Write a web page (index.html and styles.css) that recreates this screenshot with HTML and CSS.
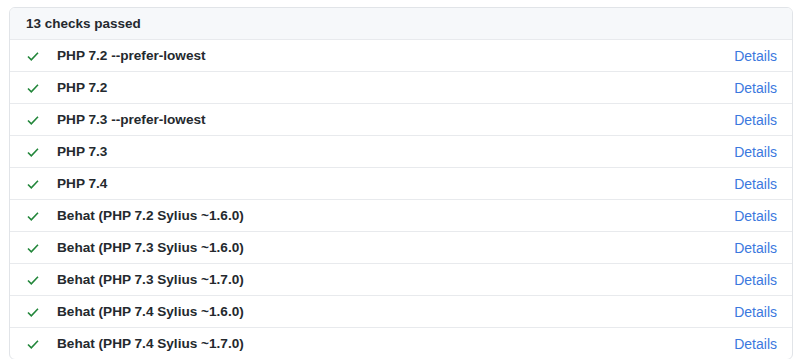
FILE: index.html
```html
<!DOCTYPE html>
<html lang="en">

<head>
    <meta charset="UTF-8">
    <meta name="viewport" content="width=device-width, initial-scale=1.0">
    <title>Checks</title>
    <link rel="stylesheet" href="styles.css">
</head>

<body>
    <div class="checkBox">
        <div class="checkHead">13 checks passed</div>
        <div class="checkRow">
            <svg class="checkIcon" viewBox="0 0 12 12" width="12" height="12"><path d="M1 6.5l3.3 3.3L11 2.8"></path></svg>
            <span class="checkName">PHP 7.2 --prefer-lowest</span>
            <a href="javascript:;">Details</a>
        </div>
        <div class="checkRow">
            <svg class="checkIcon" viewBox="0 0 12 12" width="12" height="12"><path d="M1 6.5l3.3 3.3L11 2.8"></path></svg>
            <span class="checkName">PHP 7.2</span>
            <a href="javascript:;">Details</a>
        </div>
        <div class="checkRow">
            <svg class="checkIcon" viewBox="0 0 12 12" width="12" height="12"><path d="M1 6.5l3.3 3.3L11 2.8"></path></svg>
            <span class="checkName">PHP 7.3 --prefer-lowest</span>
            <a href="javascript:;">Details</a>
        </div>
        <div class="checkRow">
            <svg class="checkIcon" viewBox="0 0 12 12" width="12" height="12"><path d="M1 6.5l3.3 3.3L11 2.8"></path></svg>
            <span class="checkName">PHP 7.3</span>
            <a href="javascript:;">Details</a>
        </div>
        <div class="checkRow">
            <svg class="checkIcon" viewBox="0 0 12 12" width="12" height="12"><path d="M1 6.5l3.3 3.3L11 2.8"></path></svg>
            <span class="checkName">PHP 7.4</span>
            <a href="javascript:;">Details</a>
        </div>
        <div class="checkRow">
            <svg class="checkIcon" viewBox="0 0 12 12" width="12" height="12"><path d="M1 6.5l3.3 3.3L11 2.8"></path></svg>
            <span class="checkName">Behat (PHP 7.2 Sylius ~1.6.0)</span>
            <a href="javascript:;">Details</a>
        </div>
        <div class="checkRow">
            <svg class="checkIcon" viewBox="0 0 12 12" width="12" height="12"><path d="M1 6.5l3.3 3.3L11 2.8"></path></svg>
            <span class="checkName">Behat (PHP 7.3 Sylius ~1.6.0)</span>
            <a href="javascript:;">Details</a>
        </div>
        <div class="checkRow">
            <svg class="checkIcon" viewBox="0 0 12 12" width="12" height="12"><path d="M1 6.5l3.3 3.3L11 2.8"></path></svg>
            <span class="checkName">Behat (PHP 7.3 Sylius ~1.7.0)</span>
            <a href="javascript:;">Details</a>
        </div>
        <div class="checkRow">
            <svg class="checkIcon" viewBox="0 0 12 12" width="12" height="12"><path d="M1 6.5l3.3 3.3L11 2.8"></path></svg>
            <span class="checkName">Behat (PHP 7.4 Sylius ~1.6.0)</span>
            <a href="javascript:;">Details</a>
        </div>
        <div class="checkRow">
            <svg class="checkIcon" viewBox="0 0 12 12" width="12" height="12"><path d="M1 6.5l3.3 3.3L11 2.8"></path></svg>
            <span class="checkName">Behat (PHP 7.4 Sylius ~1.7.0)</span>
            <a href="javascript:;">Details</a>
        </div>
    </div>
</body>

</html>
```

FILE: styles.css
```css
html,
body {
    margin: 0;
    background: #fff;
}

body {
    padding: 7px 7px 0 9px;
    font-family: "Liberation Sans", Arial, sans-serif;
    font-size: 14px;
    color: #24292e;
}

.checkBox {
    width: 782px;
    border: 1px solid #e1e4e8;
    border-radius: 6px;
    overflow: hidden;
}

.checkHead {
    height: 31px;
    line-height: 31px;
    padding-left: 16px;
    background: #f6f8fa;
    font-size: 13.5px;
    font-weight: bold;
}

.checkRow {
    display: flex;
    align-items: center;
    height: 31px;
    border-top: 1px solid #e8eaed;
    padding: 0 15px 0 17px;
}

.checkIcon {
    flex: none;
    fill: none;
    stroke: #22863a;
    stroke-width: 1.6;
}

.checkName {
    flex: 1;
    margin-left: 18px;
    font-size: 13.6px;
    font-weight: bold;
}

a {
    color: #3b78de;
    text-decoration: none;
}
```
